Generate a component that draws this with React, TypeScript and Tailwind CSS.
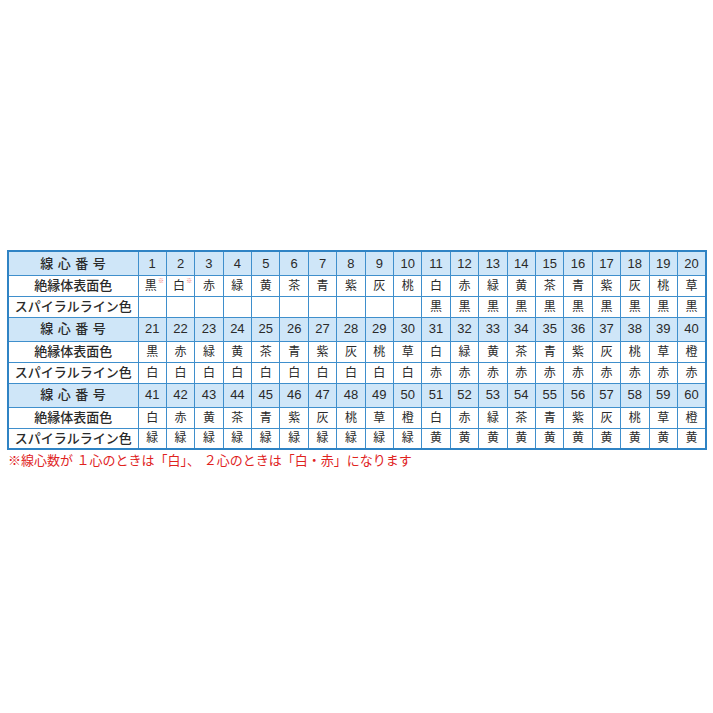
import React from 'react';

const blank = Array(10).fill('');
const rep = (s: string) => Array(10).fill(s);

const groups = [
  {
    start: 1,
    body: ['黒', '白', '赤', '緑', '黄', '茶', '青', '紫', '灰', '桃', '白', '赤', '緑', '黄', '茶', '青', '紫', '灰', '桃', '草'],
    spiral: [...blank, ...rep('黒')],
  },
  {
    start: 21,
    body: ['黒', '赤', '緑', '黄', '茶', '青', '紫', '灰', '桃', '草', '白', '緑', '黄', '茶', '青', '紫', '灰', '桃', '草', '橙'],
    spiral: [...rep('白'), ...rep('赤')],
  },
  {
    start: 41,
    body: ['白', '赤', '黄', '茶', '青', '紫', '灰', '桃', '草', '橙', '白', '赤', '緑', '茶', '青', '紫', '灰', '桃', '草', '橙'],
    spiral: [...rep('緑'), ...rep('黄')],
  },
];

const cell = 'border border-[#3f8fcc] text-center p-0 align-middle';

export default function App() {
  return (
    <div
      className="w-[713px] h-[713px] bg-white pt-[250px] pl-[7px]"
      style={{ fontFamily: '"Liberation Sans", "Noto Sans CJK JP", sans-serif' }}
    >
      <table className="table-fixed border-collapse border-2 border-[#2f83c4] w-[700px] text-[#2a2a2a]">
        <colgroup>
          <col className="w-[130px]" />
          {Array.from({ length: 20 }).map((_, i) => (
            <col key={i} />
          ))}
        </colgroup>
        <tbody>
          {groups.map((g, gi) => (
            <React.Fragment key={gi}>
              <tr className="h-[24px] bg-[#cfe6f8]">
                <td className={`${cell} text-[13px] font-medium tracking-[0.35em] pl-[4px]`}>線心番号</td>
                {g.body.map((_, i) => (
                  <td key={i} className={`${cell} text-[13px]`}>
                    {g.start + i}
                  </td>
                ))}
              </tr>
              <tr className="h-[21px]">
                <td className={`${cell} text-[13px] font-medium`}>絶縁体表面色</td>
                {g.body.map((c, i) => (
                  <td key={i} className={`${cell} text-[12px] relative`}>
                    {gi === 0 && i < 2 ? <span className="pr-[3px]">{c}</span> : c}
                    {gi === 0 && i < 2 && (
                      <span className="absolute top-[2px] right-[2px] text-[6px] leading-none text-[#ef6f6f]">※</span>
                    )}
                  </td>
                ))}
              </tr>
              <tr className="h-[21px]">
                <td className={`${cell} text-[13px] font-medium`}>スパイラルライン色</td>
                {g.spiral.map((c, i) => (
                  <td key={i} className={`${cell} text-[12px]`}>
                    {c}
                  </td>
                ))}
              </tr>
            </React.Fragment>
          ))}
        </tbody>
      </table>
      <p className="text-[13px] text-[#e0231e] leading-none mt-[4px] pl-[1px]">
        ※線心数が １心のときは「白」、 ２心のときは「白・赤」になります
      </p>
    </div>
  );
}
